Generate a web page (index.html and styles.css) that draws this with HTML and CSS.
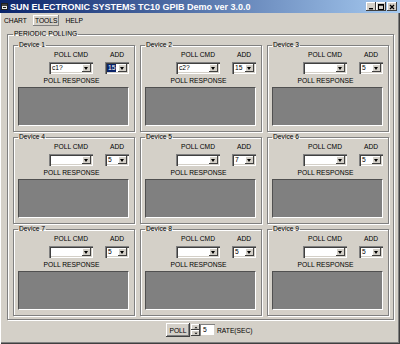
FILE: index.html
```html
<!DOCTYPE html>
<html lang="en">
<head>
    <meta charset="UTF-8">
    <title>SUN ELECTRONIC SYSTEMS TC10 GPIB Demo ver 3.0.0</title>
    <link rel="stylesheet" href="styles.css">
</head>
<body>
<div class="window">

    <!-- Title bar -->
    <div class="titlebar">
        <svg class="app-icon" viewBox="0 0 7 7">
            <rect x="0.5" y="0.5" width="6" height="6" fill="#e8e8e8" stroke="#202020"/>
            <rect x="1" y="1" width="5" height="2" fill="#404040"/>
            <rect x="2" y="4" width="3" height="1" fill="#202020"/>
        </svg>
        <span class="title">SUN ELECTRONIC SYSTEMS TC10 GPIB Demo ver 3.0.0</span>
        <div class="win-buttons">
            <span class="win-btn"><svg viewBox="0 0 6 6"><rect x="1" y="4" width="4" height="1.4" fill="#000"/></svg></span>
            <span class="win-btn"><svg viewBox="0 0 6 6"><rect x="0.5" y="0.5" width="5" height="5" fill="none" stroke="#000"/><rect x="0.5" y="0.5" width="5" height="1.2" fill="#000"/></svg></span>
            <span class="win-btn close"><svg viewBox="0 0 6 6"><path d="M1 1 L5 5 M5 1 L1 5" stroke="#000" stroke-width="1.3"/></svg></span>
        </div>
    </div>

    <!-- Menu -->
    <div class="menubar">
        <span class="menu-item">CHART</span>
        <span class="menu-item active">TOOLS</span>
        <span class="menu-item">HELP</span>
    </div>

    <div class="client">
        <fieldset class="group polling">
            <legend>PERIODIC POLLING</legend>
            <div class="devices">

                <fieldset class="group device">
                    <legend>Device 1</legend>
                    <div class="controls">
                        <div class="field"><div class="label">POLL CMD</div><div class="combo cmd"><span class="value">c1?</span><span class="drop"></span></div></div>
                        <div class="field"><div class="label">ADD</div><div class="combo addr"><span class="value selected">15</span><span class="drop"></span></div></div>
                    </div>
                    <div class="label resp-label">POLL RESPONSE</div>
                    <div class="response"></div>
                </fieldset>

                <fieldset class="group device">
                    <legend>Device 2</legend>
                    <div class="controls">
                        <div class="field"><div class="label">POLL CMD</div><div class="combo cmd"><span class="value">c2?</span><span class="drop"></span></div></div>
                        <div class="field"><div class="label">ADD</div><div class="combo addr"><span class="value">15</span><span class="drop"></span></div></div>
                    </div>
                    <div class="label resp-label">POLL RESPONSE</div>
                    <div class="response"></div>
                </fieldset>

                <fieldset class="group device">
                    <legend>Device 3</legend>
                    <div class="controls">
                        <div class="field"><div class="label">POLL CMD</div><div class="combo cmd"><span class="value"></span><span class="drop"></span></div></div>
                        <div class="field"><div class="label">ADD</div><div class="combo addr"><span class="value">5</span><span class="drop"></span></div></div>
                    </div>
                    <div class="label resp-label">POLL RESPONSE</div>
                    <div class="response"></div>
                </fieldset>

                <fieldset class="group device">
                    <legend>Device 4</legend>
                    <div class="controls">
                        <div class="field"><div class="label">POLL CMD</div><div class="combo cmd"><span class="value"></span><span class="drop"></span></div></div>
                        <div class="field"><div class="label">ADD</div><div class="combo addr"><span class="value">5</span><span class="drop"></span></div></div>
                    </div>
                    <div class="label resp-label">POLL RESPONSE</div>
                    <div class="response"></div>
                </fieldset>

                <fieldset class="group device">
                    <legend>Device 5</legend>
                    <div class="controls">
                        <div class="field"><div class="label">POLL CMD</div><div class="combo cmd"><span class="value"></span><span class="drop"></span></div></div>
                        <div class="field"><div class="label">ADD</div><div class="combo addr"><span class="value">7</span><span class="drop"></span></div></div>
                    </div>
                    <div class="label resp-label">POLL RESPONSE</div>
                    <div class="response"></div>
                </fieldset>

                <fieldset class="group device">
                    <legend>Device 6</legend>
                    <div class="controls">
                        <div class="field"><div class="label">POLL CMD</div><div class="combo cmd"><span class="value"></span><span class="drop"></span></div></div>
                        <div class="field"><div class="label">ADD</div><div class="combo addr"><span class="value">5</span><span class="drop"></span></div></div>
                    </div>
                    <div class="label resp-label">POLL RESPONSE</div>
                    <div class="response"></div>
                </fieldset>

                <fieldset class="group device">
                    <legend>Device 7</legend>
                    <div class="controls">
                        <div class="field"><div class="label">POLL CMD</div><div class="combo cmd"><span class="value"></span><span class="drop"></span></div></div>
                        <div class="field"><div class="label">ADD</div><div class="combo addr"><span class="value">5</span><span class="drop"></span></div></div>
                    </div>
                    <div class="label resp-label">POLL RESPONSE</div>
                    <div class="response"></div>
                </fieldset>

                <fieldset class="group device">
                    <legend>Device 8</legend>
                    <div class="controls">
                        <div class="field"><div class="label">POLL CMD</div><div class="combo cmd"><span class="value"></span><span class="drop"></span></div></div>
                        <div class="field"><div class="label">ADD</div><div class="combo addr"><span class="value">5</span><span class="drop"></span></div></div>
                    </div>
                    <div class="label resp-label">POLL RESPONSE</div>
                    <div class="response"></div>
                </fieldset>

                <fieldset class="group device">
                    <legend>Device 9</legend>
                    <div class="controls">
                        <div class="field"><div class="label">POLL CMD</div><div class="combo cmd"><span class="value"></span><span class="drop"></span></div></div>
                        <div class="field"><div class="label">ADD</div><div class="combo addr"><span class="value">5</span><span class="drop"></span></div></div>
                    </div>
                    <div class="label resp-label">POLL RESPONSE</div>
                    <div class="response"></div>
                </fieldset>

            </div>
        </fieldset>

        <!-- Poll controls -->
        <div class="poll-bar">
            <span class="button">POLL</span>
            <span class="spin">
                <span class="spin-btn"><svg viewBox="0 0 5 3"><path d="M2.5 0.5 L4.5 2.5 L0.5 2.5 Z" fill="#000"/></svg></span>
                <span class="spin-btn"><svg viewBox="0 0 5 3"><path d="M0.5 0.5 L4.5 0.5 L2.5 2.5 Z" fill="#000"/></svg></span>
            </span>
            <span class="textbox">5</span>
            <span class="rate">RATE(SEC)</span>
        </div>
    </div>

</div>
</body>
</html>
```

FILE: styles.css
```css
/* Base */
body {
    margin: 0;
    font-family: "Liberation Sans", Arial, sans-serif;
    font-size: 6.7px;
    color: #000;
    background: #d4d0c8;
}

/* Window frame */
.window {
    width: 400px;
    height: 344px;
    box-sizing: border-box;
    overflow: hidden;
    box-shadow: inset 1px 0 #ffffff, inset -1px -1px #404040, inset -2px -2px #808080;
}

/* Title bar */
.titlebar {
    height: 13px;
    display: flex;
    align-items: center;
    padding: 0 3px 0 1px;
    background: linear-gradient(to right, #0a246a, #a6caf0);
}

.app-icon {
    width: 7px;
    height: 7px;
    margin-right: 2px;
}

.title {
    flex: 1;
    color: #fff;
    font-size: 9px;
    font-weight: bold;
    white-space: nowrap;
}

.win-buttons {
    display: flex;
}

.win-btn {
    width: 10px;
    height: 9px;
    display: flex;
    align-items: center;
    justify-content: center;
    background: #d4d0c8;
    box-shadow: inset -1px -1px #404040, inset 1px 1px #ffffff;
}

.win-btn svg {
    width: 6px;
    height: 6px;
}

.win-btn.close {
    margin-left: 1px;
}

/* Menu */
.menubar {
    height: 14px;
    display: flex;
    align-items: center;
    gap: 4px;
    padding-left: 2px;
}

.menu-item {
    padding: 2px 2px;
    line-height: 7px;
}

.menu-item.active {
    box-shadow: inset -1px -1px #808080, inset 1px 1px #ffffff;
}

/* Client area */
.client {
    padding-top: 3px;
}

/* Etched group boxes */
.group {
    margin: 0;
    min-width: 0;
    border: 1px solid #808080;
    box-shadow: inset 1px 1px #ffffff, 1px 1px #ffffff;
}

.group legend {
    padding: 0 1px;
    line-height: 8px;
}

.polling {
    margin: 0 6px 0 7px;
    padding: 3px 4px 3px 5px;
}

.devices {
    display: grid;
    grid-template-columns: repeat(3, 122px);
    column-gap: 5px;
    row-gap: 1px;
}

.device {
    padding: 2px 5px 5px 4px;
}

.label {
    line-height: 8px;
    white-space: nowrap;
}

.controls {
    display: flex;
    justify-content: flex-end;
    gap: 12px;
}

.field {
    display: flex;
    flex-direction: column;
    align-items: center;
    gap: 3px;
}

/* Combo boxes */
.combo {
    height: 12px;
    box-sizing: border-box;
    display: flex;
    align-items: stretch;
    background: #fff;
    box-shadow: inset 1px 1px #808080, inset 2px 2px #404040, inset -1px -1px #ffffff, inset -2px -2px #d4d0c8;
    padding: 2px;
}

.combo.cmd {
    width: 44px;
}

.combo.addr {
    width: 24px;
}

.combo .value {
    flex: 1;
    padding-left: 1px;
    line-height: 8px;
}

.combo .value.selected {
    flex: 0 0 auto;
    margin-right: auto;
    padding: 0 1px;
    background: #0a246a;
    color: #fff;
}

.combo .drop {
    width: 9px;
    position: relative;
    background: #d4d0c8;
    box-shadow: inset -1px -1px #404040, inset 1px 1px #ffffff;
}

/* down arrow on the drop button */
.combo .drop::after {
    content: "";
    position: absolute;
    left: 2px;
    top: 3px;
    border-left: 2.5px solid transparent;
    border-right: 2.5px solid transparent;
    border-top: 3px solid #000;
}

.resp-label {
    text-align: center;
    margin-top: 3px;
    padding-right: 4px;
}

/* Poll response panel */
.response {
    height: 37px;
    margin-top: 2px;
    background: #808080;
    border: 1px solid;
    border-color: #505050 #ffffff #ffffff #505050;
}

/* Bottom poll controls */
.poll-bar {
    display: flex;
    align-items: center;
    margin-top: 3px;
    padding-left: 166px;
}

.button {
    width: 24px;
    height: 14px;
    box-sizing: border-box;
    display: flex;
    align-items: center;
    justify-content: center;
    box-shadow: inset -1px -1px #404040, inset 1px 1px #ffffff, inset -2px -2px #808080;
}

.spin {
    display: flex;
    flex-direction: column;
    width: 9px;
    height: 12px;
    margin-left: 1px;
}

.spin-btn {
    flex: 1;
    display: flex;
    align-items: center;
    justify-content: center;
    box-shadow: inset -1px -1px #404040, inset 1px 1px #ffffff;
}

.spin-btn svg {
    width: 4px;
    height: 3px;
}

.textbox {
    width: 15px;
    height: 12px;
    box-sizing: border-box;
    padding: 2px 0 0 3px;
    line-height: 8px;
    background: #fff;
    box-shadow: inset 1px 1px #808080, inset -1px -1px #d4d0c8;
}

.rate {
    margin-left: 2px;
}
```
